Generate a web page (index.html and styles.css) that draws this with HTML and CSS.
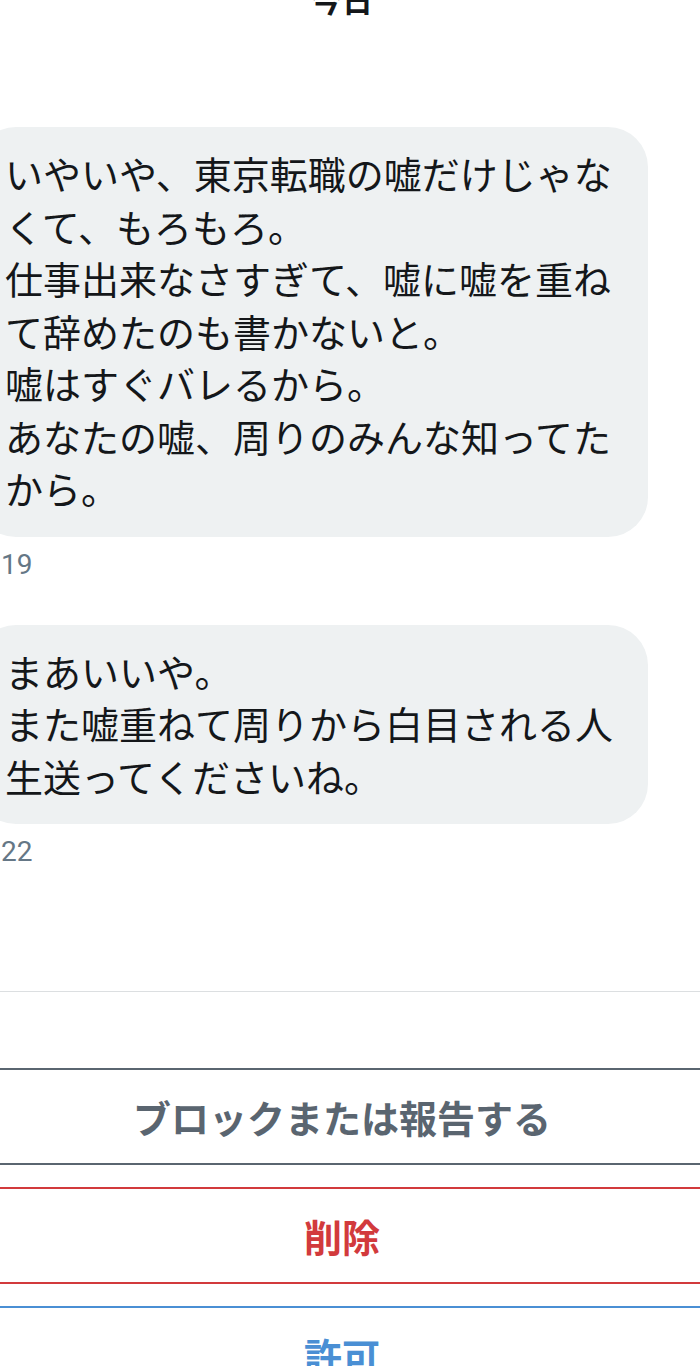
FILE: index.html
```html
<!DOCTYPE html>
<html lang="ja">
<head>
  <meta charset="UTF-8" />
  <title>メッセージリクエスト</title>
  <meta name="viewport" content="width=device-width, initial-scale=1" />
  <link rel="stylesheet" href="styles.css">
</head>
<body>

<div class="screen">
  <div class="day">今日</div>

  <div class="thread">
    <div class="msg">
      <div class="bubble">いやいや、東京転職の嘘だけじゃなくて、もろもろ。<br>仕事出来なさすぎて、嘘に嘘を重ねて辞めたのも書かないと。<br>嘘はすぐバレるから。<br>あなたの嘘、周りのみんな知ってたから。</div>
      <div class="time">19</div>
    </div>

    <div class="msg">
      <div class="bubble">まあいいや。<br>また嘘重ねて周りから白目される人生送ってくださいね。</div>
      <div class="time">22</div>
    </div>
  </div>

  <!-- request actions -->
  <div class="request">
    <button class="btn btn-block">ブロックまたは報告する</button>
    <button class="btn btn-delete">削除</button>
    <button class="btn btn-accept">許可</button>
  </div>
</div>

</body>
</html>
```

FILE: styles.css
```css
* { box-sizing: border-box; }
html, body {
  margin: 0;
  background: #fff;
  overflow: hidden;
}
body {
  font-family: "Noto Sans CJK JP", "Noto Sans", sans-serif;
  color: #14171a;
}
.screen {
  margin: 0 -8px 0 -24px;
}
.day {
  margin-top: -21px;
  text-align: center;
  font-size: 31px;
  font-weight: 700;
  line-height: 40px;
}
.thread {
  padding-top: 108px;
}
.msg {
  margin-bottom: 42px;
}
.bubble {
  width: 672px;
  padding: 20px 24px 22px 29px;
  background: #eef1f2;
  border-radius: 40px;
  font-size: 38px;
  line-height: 52.5px;
}
.time {
  margin-top: 10px;
  padding-left: 25px;
  font-family: Roboto, "Liberation Sans", sans-serif;
  font-size: 28px;
  line-height: 36px;
  color: #657786;
}
.request {
  margin-top: 121px;
  border-top: 1px solid #dcdfe1;
  padding-top: 76px;
  display: flex;
  flex-direction: column;
  gap: 22px;
}
.btn {
  display: block;
  width: 100%;
  height: 97px;
  background: #fff;
  border: 2px solid;
  font-family: "Noto Sans CJK JP", sans-serif;
  font-size: 38px;
  font-weight: 700;
  padding: 0;
  cursor: pointer;
}
.btn-block {
  color: #5a6570;
  border-color: #5a6570;
}
.btn-delete {
  color: #d23a3c;
  border-color: #d23a3c;
}
.btn-accept {
  color: #4a8fd4;
  border-color: #4a8fd4;
}
```
